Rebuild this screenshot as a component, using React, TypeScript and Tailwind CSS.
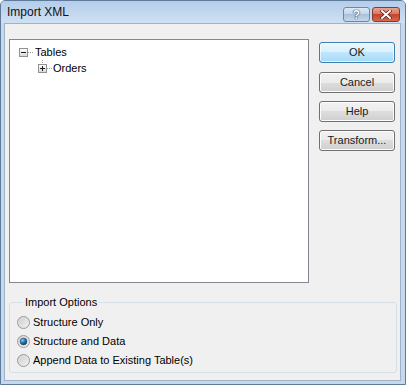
import React from "react";

const font = { fontFamily: '"Liberation Sans", Arial, sans-serif' };

function TreeBox({ plus, vline, w }: { plus: boolean; vline?: boolean; w: number }) {
  return (
    <svg width={w} height="16" viewBox={`0 0 ${w} 16`} className="shrink-0">
      <defs>
        <linearGradient id={plus ? "gp" : "gm"} x1="0" y1="0" x2="0" y2="1">
          <stop offset="0" stopColor="#ffffff" />
          <stop offset="1" stopColor="#d8d8d8" />
        </linearGradient>
      </defs>
      {vline && (
        <line x1="4.5" y1="0" x2="4.5" y2="3.5" stroke="#a0a0a0" strokeDasharray="1 1" />
      )}
      <line x1="9" y1="8.5" x2={w - 1} y2="8.5" stroke="#a0a0a0" strokeDasharray="1 1" />
      <rect x="0.5" y="4.5" width="8" height="8" fill={`url(#${plus ? "gp" : "gm"})`} stroke="#919191" />
      <line x1="2" y1="8.5" x2="7" y2="8.5" stroke="#1a1a1a" />
      {plus && <line x1="4.5" y1="6" x2="4.5" y2="11" stroke="#1a1a1a" />}
    </svg>
  );
}

function Radio({ checked }: { checked?: boolean }) {
  return (
    <svg width="13" height="13" viewBox="0 0 13 13" className="shrink-0">
      <defs>
        <linearGradient id="rf" x1="0" y1="0" x2="1" y2="1">
          <stop offset="0" stopColor="#c8c8c8" />
          <stop offset="1" stopColor="#f6f6f6" />
        </linearGradient>
        <radialGradient id="rd" cx="0.35" cy="0.3" r="0.7">
          <stop offset="0" stopColor="#8fd0f5" />
          <stop offset="0.5" stopColor="#2a7fbf" />
          <stop offset="1" stopColor="#0a3d66" />
        </radialGradient>
      </defs>
      <circle cx="6.5" cy="6.5" r="6" fill="url(#rf)" stroke="#9a9a9a" />
      <circle cx="6.5" cy="6.5" r="4.6" fill="none" stroke="#e6e6e6" strokeWidth="0.8" />
      {checked && <circle cx="6.5" cy="6.5" r="3.4" fill="url(#rd)" stroke="#1d4f78" strokeWidth="0.6" />}
    </svg>
  );
}

function Btn({ label, def }: { label: string; def?: boolean }) {
  return (
    <div
      className={
        "h-[21px] w-[76px] rounded-[3px] border flex items-center justify-center text-[11px] text-[#1a1a1a] " +
        (def
          ? "border-[#3c7fb1] bg-[linear-gradient(#eaf6fd_0%,#d9f0fc_50%,#bee6fd_50%,#a7d9f5_100%)] shadow-[inset_0_0_0_1px_#ffffffaa]"
          : "border-[#707070] bg-[linear-gradient(#f2f2f2_0%,#ebebeb_50%,#dddddd_50%,#cfcfcf_100%)] shadow-[inset_0_0_0_1px_#fcfcfc]")
      }
    >
      {label}
    </div>
  );
}

export default function App() {
  return (
    <div style={font} className="w-[406px] h-[385px] border border-[#5f7b9c] rounded-t-[5px] bg-[#c4d8ee] flex flex-col overflow-hidden">
      {/* Title bar */}
      <div className="h-[22px] shrink-0 flex items-start bg-[linear-gradient(#b4cde9,#cfe0f2)] pl-[6px] pr-[5px]">
        <div className="pt-[4px] text-[12px] leading-[14px] text-[#111] flex-1">Import XML</div>
        <div className="flex pt-[6px] gap-[2px]">
          <div className="w-[27px] h-[15px] rounded-[3px] border border-[#6c88a8] bg-[linear-gradient(#dde9f5_0%,#c0d3e9_50%,#a9c1dd_50%,#c6d8ec_100%)] flex items-center justify-center text-[12px] font-bold leading-none text-white [text-shadow:0_0_1px_#2c4a6e,0_0_1px_#2c4a6e,0_0_1px_#2c4a6e]">
            ?
          </div>
          <div className="w-[28px] h-[15px] rounded-[3px] border border-[#8a3a2c] bg-[linear-gradient(#e8a493_0%,#d7715c_50%,#c3452c_50%,#d6684e_100%)] flex items-center justify-center">
            <svg width="12" height="9" viewBox="0 0 12 9">
              <path d="M2 1 L10 8 M10 1 L2 8" stroke="#5a1a10" strokeWidth="3.4" strokeLinecap="square" />
              <path d="M2 1 L10 8 M10 1 L2 8" stroke="#ffffff" strokeWidth="2" strokeLinecap="square" />
            </svg>
          </div>
        </div>
      </div>
      {/* Frame + client */}
      <div className="flex-1 pl-[3px] pr-[4px] pb-[3px] pt-0 flex">
        <div className="flex-1 border border-[#9fb2c7] bg-[#f0f0f0] pl-[4px] pt-[15px] flex flex-col">
          <div className="flex">
            <div className="w-[300px] h-[244px] border border-[#828790] bg-white pt-[4px] text-[11px] text-black">
              <div className="h-[16px] flex items-center pl-[9px]">
                <TreeBox plus={false} w={16} />
                <span className="leading-[13px]">Tables</span>
              </div>
              <div className="h-[16px] flex items-center pl-[28px]">
                <TreeBox plus={true} vline w={15} />
                <span className="leading-[13px]">Orders</span>
              </div>
            </div>
            <div className="ml-[10px] pt-[3px] flex flex-col gap-[8px]">
              <Btn label="OK" def />
              <div className="mt-[1px]">
                <Btn label="Cancel" />
              </div>
              <Btn label="Help" />
              <Btn label="Transform..." />
            </div>
          </div>
          <fieldset className="mt-[13px] w-[388px] border border-[#d5dfe5] rounded-[3px] pl-[7px] pt-[4px] pb-[2px] text-[11px] text-black">
            <legend className="ml-[6px] px-[2px] leading-[13px]">Import Options</legend>
            <div className="h-[19px] flex items-center gap-[3px]">
              <Radio />
              <span>Structure Only</span>
            </div>
            <div className="h-[19px] flex items-center gap-[3px]">
              <Radio checked />
              <span>Structure and Data</span>
            </div>
            <div className="h-[19px] flex items-center gap-[3px]">
              <Radio />
              <span>Append Data to Existing Table(s)</span>
            </div>
          </fieldset>
        </div>
      </div>
    </div>
  );
}
